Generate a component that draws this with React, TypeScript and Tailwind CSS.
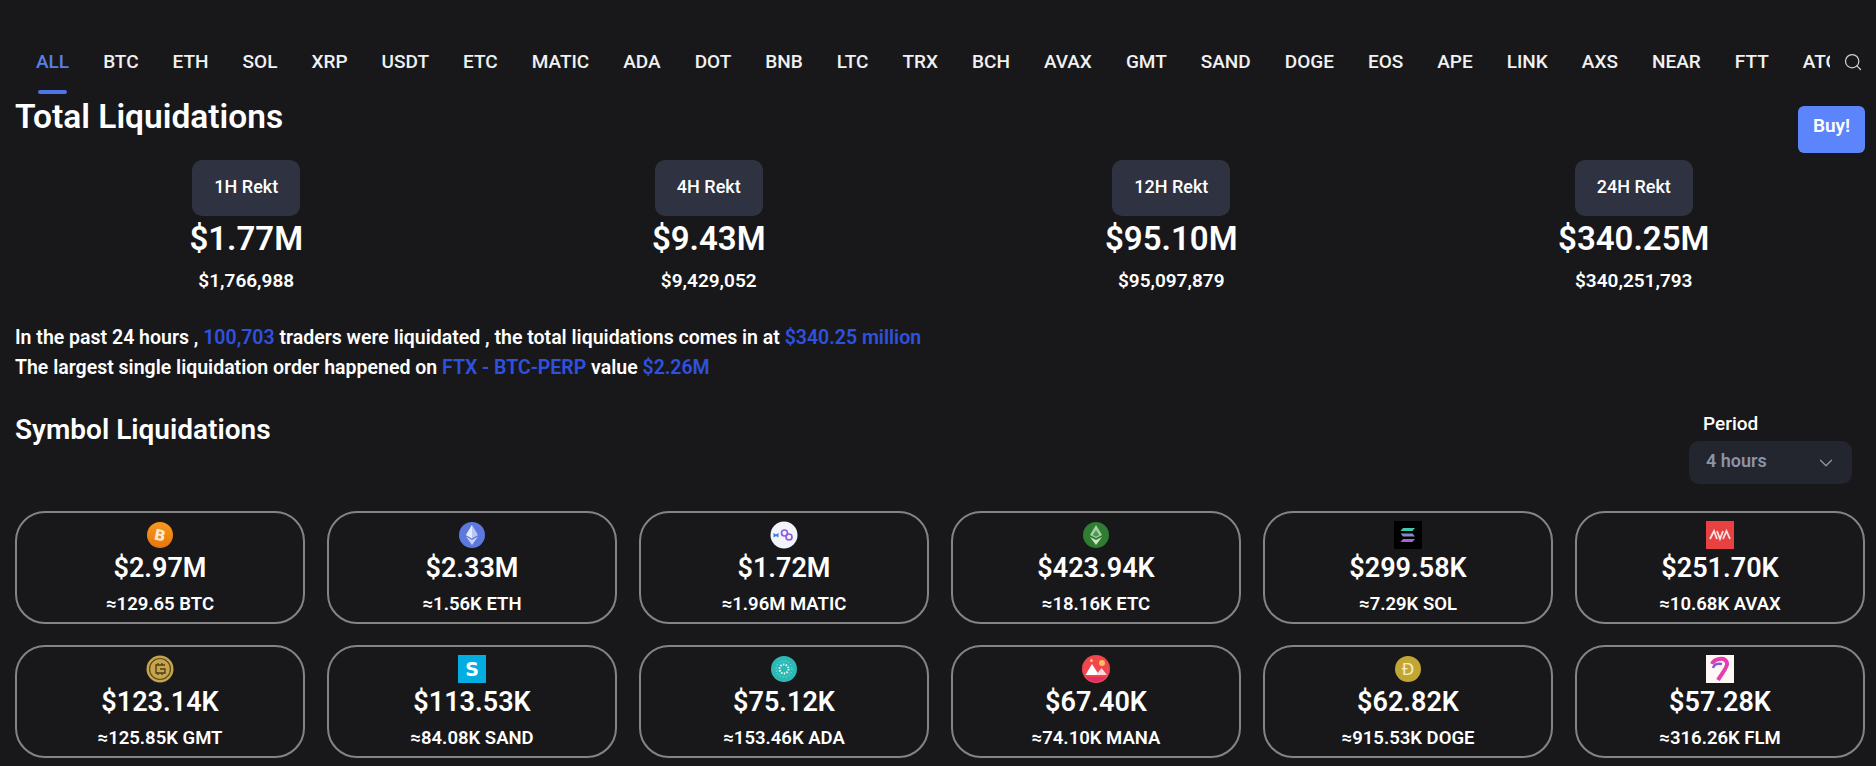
import { ChevronDown, Search } from "lucide-react";
import type { ReactNode } from "react";

const tabs = ["ALL", "BTC", "ETH", "SOL", "XRP", "USDT", "ETC", "MATIC", "ADA", "DOT", "BNB", "LTC", "TRX", "BCH", "AVAX", "GMT", "SAND", "DOGE", "EOS", "APE", "LINK", "AXS", "NEAR", "FTT", "ATOM"];

const totals = [
  { label: "1H Rekt", value: "$1.77M", exact: "$1,766,988" },
  { label: "4H Rekt", value: "$9.43M", exact: "$9,429,052" },
  { label: "12H Rekt", value: "$95.10M", exact: "$95,097,879" },
  { label: "24H Rekt", value: "$340.25M", exact: "$340,251,793" },
];

const icons: Record<string, ReactNode> = {
  btc: (
    <svg viewBox="0 0 28 28" className="w-7 h-7">
      <defs>
        <linearGradient id="btc-fill" x1="0" y1="0" x2="0" y2="1">
          <stop offset="0" stopColor="#f79a1e" />
          <stop offset="1" stopColor="#e8740c" />
        </linearGradient>
      </defs>
      <circle cx="14" cy="14" r="13" fill="url(#btc-fill)" />
      <text x="14" y="19.500" textAnchor="middle" fontSize="15" fontWeight="700" fill="#fde9cf" transform="rotate(12 14 14)" fontFamily="DejaVu Sans">B</text>
    </svg>
  ),
  eth: (
    <svg viewBox="0 0 28 28" className="w-7 h-7">
      <circle cx="14" cy="14" r="13" fill="#5e79dd" />
      <path d="M14 4l6 10-6 3.500L8 14z" fill="#b9c6f3" />
      <path d="M14 4v13.500L8 14z" fill="#e4e9fb" />
      <path d="M14 19l6-3.500L14 24l-6-8.500z" fill="#c9d3f6" />
    </svg>
  ),
  matic: (
    <svg viewBox="0 0 28 28" className="w-7 h-7">
      <circle cx="14" cy="14" r="13.500" fill="#f3f4fb" />
      <path d="M3.500 12l2.500 1.500L8.500 12v4.500L6 15l-2.500 1.500z" fill="#2f7de1" />
      <circle cx="14.500" cy="12" r="3" fill="none" stroke="#8f5de0" strokeWidth="1.700" />
      <circle cx="19" cy="16" r="3" fill="none" stroke="#8f5de0" strokeWidth="1.700" />
    </svg>
  ),
  etc: (
    <svg viewBox="0 0 28 28" className="w-7 h-7">
      <circle cx="14" cy="14" r="13" fill="#2f7d32" />
      <path d="M14 4l6 10-6 3-6-3z" fill="#a9d3a7" />
      <path d="M14 19l6-3-6 8-6-8z" fill="#cbe6c9" />
      <path d="M14 9l3.500 5-3.500 1.800L10.500 14z" fill="#4d9a4f" />
    </svg>
  ),
  sol: (
    <svg viewBox="0 0 28 28" className="w-7 h-7">
      <rect width="28" height="28" fill="#000" />
      <path d="M9 7h12l-2.500 3H6.500z" fill="#3fc9a8" />
      <path d="M6.500 12.500h12l2.500 3H9z" fill="#7c8fc8" />
      <path d="M9 18h12l-2.500 3H6.500z" fill="#a463d8" />
    </svg>
  ),
  avax: (
    <svg viewBox="0 0 28 28" className="w-7 h-7">
      <rect width="28" height="28" fill="#e84142" />
      <path d="M4 18L8 10L11 18M11 10L14 18L17 10M17 18L20.500 10L24 18" fill="none" stroke="#fbe4e4" strokeWidth="1.800" />
    </svg>
  ),
  gmt: (
    <svg viewBox="0 0 28 28" className="w-7 h-7">
      <circle cx="14" cy="14" r="13.500" fill="#c7a54e" />
      <circle cx="14" cy="14" r="10.500" fill="none" stroke="#5c4a1c" strokeWidth="1.200" />
      <path d="M19 10h-9v8h9v-4h-5M12 8v2M16 8v2M12 18v2M16 18v2" fill="none" stroke="#4f3f18" strokeWidth="1.400" />
    </svg>
  ),
  sand: (
    <svg viewBox="0 0 28 28" className="w-7 h-7">
      <rect width="28" height="28" fill="#04ade0" />
      <text x="14" y="20.500" textAnchor="middle" fontSize="19" fontWeight="700" fill="#fff" fontFamily="DejaVu Sans">S</text>
    </svg>
  ),
  ada: (
    <svg viewBox="0 0 28 28" className="w-7 h-7">
      <circle cx="14" cy="14" r="13" fill="#2cb8b5" />
      <circle cx="14" cy="14" r="4.500" fill="none" stroke="#e6fbfa" strokeWidth="2" strokeDasharray="1.500 1.300" />
      <circle cx="14" cy="14" r="8" fill="none" stroke="#a8e8e5" strokeWidth="1" strokeDasharray="1 2.200" />
    </svg>
  ),
  mana: (
    <svg viewBox="0 0 28 28" className="w-7 h-7">
      <circle cx="14" cy="14" r="14" fill="#f2464f" />
      <circle cx="20" cy="8" r="3" fill="#ffbc5b" />
      <circle cx="9.500" cy="5.500" r="1.500" fill="#ffbc5b" />
      <path d="M10 9l7 11H3.500z" fill="#fff" />
      <path d="M19.500 13l5.500 7H14z" fill="#ffd9dc" />
      <path d="M4 22h20a13 13 0 0 1-20 0z" fill="#e22f6b" />
    </svg>
  ),
  doge: (
    <svg viewBox="0 0 28 28" className="w-7 h-7">
      <circle cx="14" cy="14" r="13" fill="#c2a633" />
      <text x="14" y="20" textAnchor="middle" fontSize="16" fontWeight="400" fill="#f6edc4" fontFamily="DejaVu Sans">Ð</text>
    </svg>
  ),
  flm: (
    <svg viewBox="0 0 28 28" className="w-7 h-7">
      <rect width="28" height="28" fill="#fdf8f3" />
      <path d="M6 9c2-5 13-8 15-1 1 4-5 10-9 17" fill="none" stroke="#e63db0" strokeWidth="4" />
      <path d="M7 13c1-4 5-5 9-4" fill="none" stroke="#8a56d8" strokeWidth="2.500" />
    </svg>
  ),
};

const symbols = [
  { icon: "btc", value: "$2.97M", amount: "≈129.65 BTC" },
  { icon: "eth", value: "$2.33M", amount: "≈1.56K ETH" },
  { icon: "matic", value: "$1.72M", amount: "≈1.96M MATIC" },
  { icon: "etc", value: "$423.94K", amount: "≈18.16K ETC" },
  { icon: "sol", value: "$299.58K", amount: "≈7.29K SOL" },
  { icon: "avax", value: "$251.70K", amount: "≈10.68K AVAX" },
  { icon: "gmt", value: "$123.14K", amount: "≈125.85K GMT" },
  { icon: "sand", value: "$113.53K", amount: "≈84.08K SAND" },
  { icon: "ada", value: "$75.12K", amount: "≈153.46K ADA" },
  { icon: "mana", value: "$67.40K", amount: "≈74.10K MANA" },
  { icon: "doge", value: "$62.82K", amount: "≈915.53K DOGE" },
  { icon: "flm", value: "$57.28K", amount: "≈316.26K FLM" },
];

export default function App() {
  return (
    <div className="h-screen overflow-hidden bg-[#18181b] text-white font-['Roboto',sans-serif]">
      <nav className="flex items-center h-[94px] pt-[30px]">
        <div className="flex-1 min-w-0 h-full overflow-hidden flex gap-[34px] pl-[36px]">
          {tabs.map((tab, i) => (
            <div key={tab} className={`relative shrink-0 flex items-center h-full text-[19px] font-medium ${i === 0 ? "text-[#5b7fe8]" : "text-[#f1f1f1]"}`}>
              {tab}
              {i === 0 && <span className="absolute bottom-0 left-[2px] right-[2px] h-[4px] rounded-full bg-[#4e74e6]" />}
            </div>
          ))}
        </div>
        <Search className="w-[20px] h-[20px] mx-[13px] text-[#d0d0d0] shrink-0" strokeWidth={1.5} />
      </nav>

      <div className="flex justify-between items-start pl-[15px] pr-[11px] mb-[7px]">
        <h2 className="text-[33.500px] leading-[46px] font-semibold">Total Liquidations</h2>
        <button className="mt-[12px] w-[67px] h-[47px] pb-[7px] rounded-[6px] bg-[#5d85fb] text-[19px] font-semibold">Buy!</button>
      </div>

      <div className="grid grid-cols-4 pl-[15px] pr-[11px]">
        {totals.map((t) => (
          <div key={t.label} className="flex flex-col items-center">
            <div className="h-[56px] px-[22px] pb-[3px] flex items-center rounded-[10px] bg-[#2f3241] text-[18px] font-medium">{t.label}</div>
            <div className="mt-[1px] text-[33px] leading-[44px] font-semibold">{t.value}</div>
            <div className="mt-[8px] text-[19px] leading-[24px] font-semibold">{t.exact}</div>
          </div>
        ))}
      </div>

      <div className="mt-[30px] pl-[15px] text-[19.500px] leading-[30px] font-semibold">
        <p>
          In the past 24 hours , <span className="text-[#2f51e0]">100,703</span> traders were liquidated , the total liquidations comes in at{" "}
          <span className="text-[#2f51e0]">$340.25 million</span>
        </p>
        <p>
          The largest single liquidation order happened on <span className="text-[#2f51e0]">FTX - BTC-PERP</span> value{" "}
          <span className="text-[#2f51e0]">$2.26M</span>
        </p>
      </div>

      <div className="mt-[29px] flex justify-between items-start pl-[15px] pr-[24px] mb-[27px]">
        <h2 className="text-[28px] leading-[36px] font-semibold">Symbol Liquidations</h2>
        <div className="w-[163px]">
          <div className="pl-[14px] text-[19px] leading-[24px] font-medium">Period</div>
          <div className="mt-[5px] h-[43px] pl-[17px] pr-[15px] flex items-center justify-between rounded-[10px] bg-[#23252f] text-[#8d94a8] text-[18px] font-semibold">
            <span className="pb-[5px]">4 hours</span>
            <ChevronDown className="w-[22px] h-[22px] mt-[1px]" strokeWidth={1.5} />
          </div>
        </div>
      </div>

      <div className="grid grid-cols-6 gap-x-[22px] gap-y-[21px] pl-[15px] pr-[11px]">
        {symbols.map((s) => (
          <div key={s.icon} className="h-[113px] pt-[8px] flex flex-col items-center rounded-[30px] border-2 border-[#848484]">
            {icons[s.icon]}
            <div className="mt-[1px] text-[27px] leading-[36px] font-semibold">{s.value}</div>
            <div className="mt-[6px] text-[18.500px] leading-[24px] font-semibold">{s.amount}</div>
          </div>
        ))}
      </div>
    </div>
  );
}
